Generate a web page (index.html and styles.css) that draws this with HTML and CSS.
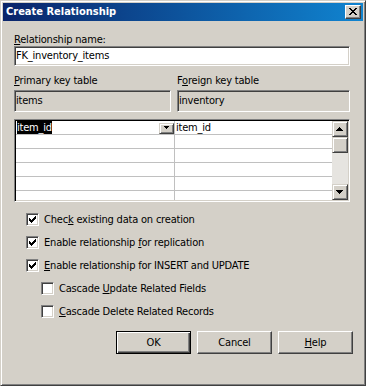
FILE: index.html
```html
<!DOCTYPE html>
<html lang="en">
  <head>
    <meta charset="UTF-8" />
    <title>Create Relationship</title>
    <link rel="stylesheet" href="styles.css">
  </head>
  <body>
    <div class="window">
      <div class="titlebar">
        <span class="title">Create Relationship</span>
        <span class="close-btn">
          <svg width="8" height="7" viewBox="0 0 8 7" shape-rendering="crispEdges">
            <path fill="#000" d="M0 0h2v1H0zM6 0h2v1H6zM1 1h2v1H1zM5 1h2v1H5zM2 2h4v1H2zM3 3h2v1H3zM2 4h4v1H2zM1 5h2v1H1zM5 5h2v1H5zM0 6h2v1H0zM6 6h2v1H6z"/>
          </svg>
        </span>
      </div>
      <div class="content">
        <div class="label"><u>R</u>elationship name:</div>
        <div class="field">FK_inventory_items</div>

        <div class="tables">
          <div class="table-col primary">
            <div class="label"><u>P</u>rimary key table</div>
            <div class="field readonly">items</div>
          </div>
          <div class="table-col foreign">
            <div class="label">F<u>o</u>reign key table</div>
            <div class="field readonly">inventory</div>
          </div>
        </div>

        <div class="grid">
          <div class="grid-rows">
            <div class="grid-row">
              <div class="cell pk">
                <span class="selected">item_id</span>
                <span class="drop-btn">
                  <svg width="5" height="3" viewBox="0 0 5 3" shape-rendering="crispEdges">
                    <path fill="#000" d="M0 0h5v1H0zM1 1h3v1H1zM2 2h1v1H2z"/>
                  </svg>
                </span>
              </div>
              <div class="cell fk">item_id</div>
            </div>
            <div class="grid-row"><div class="cell pk"></div><div class="cell fk"></div></div>
            <div class="grid-row"><div class="cell pk"></div><div class="cell fk"></div></div>
            <div class="grid-row"><div class="cell pk"></div><div class="cell fk"></div></div>
            <div class="grid-row"><div class="cell pk"></div><div class="cell fk"></div></div>
            <div class="grid-row"><div class="cell pk"></div><div class="cell fk"></div></div>
          </div>
          <div class="scrollbar">
            <span class="sb-btn">
              <svg width="7" height="4" viewBox="0 0 7 4" shape-rendering="crispEdges">
                <path fill="#000" d="M3 0h1v1H3zM2 1h3v1H2zM1 2h5v1H1zM0 3h7v1H0z"/>
              </svg>
            </span>
            <span class="sb-btn thumb"></span>
            <span class="sb-track"></span>
            <span class="sb-btn">
              <svg width="7" height="4" viewBox="0 0 7 4" shape-rendering="crispEdges">
                <path fill="#000" d="M0 0h7v1H0zM1 1h5v1H1zM2 2h3v1H2zM3 3h1v1H3z"/>
              </svg>
            </span>
          </div>
        </div>

        <div class="options">
          <div class="check">
            <span class="box"><svg width="7" height="7" viewBox="0 0 7 7" shape-rendering="crispEdges"><path fill="#000" d="M6 0h1v1H6zM5 1h2v1H5zM0 2h1v1H0zM4 2h3v1H4zM0 3h2v1H0zM3 3h3v1H3zM0 4h5v1H0zM1 5h3v1H1zM2 6h1v1H2z"/></svg></span>
            <span>Chec<u>k</u> existing data on creation</span>
          </div>
          <div class="check">
            <span class="box"><svg width="7" height="7" viewBox="0 0 7 7" shape-rendering="crispEdges"><path fill="#000" d="M6 0h1v1H6zM5 1h2v1H5zM0 2h1v1H0zM4 2h3v1H4zM0 3h2v1H0zM3 3h3v1H3zM0 4h5v1H0zM1 5h3v1H1zM2 6h1v1H2z"/></svg></span>
            <span>Enable relationship <u>f</u>or replication</span>
          </div>
          <div class="check">
            <span class="box"><svg width="7" height="7" viewBox="0 0 7 7" shape-rendering="crispEdges"><path fill="#000" d="M6 0h1v1H6zM5 1h2v1H5zM0 2h1v1H0zM4 2h3v1H4zM0 3h2v1H0zM3 3h3v1H3zM0 4h5v1H0zM1 5h3v1H1zM2 6h1v1H2z"/></svg></span>
            <span><u>E</u>nable relationship for INSERT and UPDATE</span>
          </div>
          <div class="check sub">
            <span class="box"></span>
            <span>Cascade <u>U</u>pdate Related Fields</span>
          </div>
          <div class="check sub">
            <span class="box"></span>
            <span><u>C</u>ascade Delete Related Records</span>
          </div>
        </div>

        <div class="buttons">
          <button class="btn default">OK</button>
          <button class="btn">Cancel</button>
          <button class="btn"><u>H</u>elp</button>
        </div>
      </div>
    </div>
  </body>
</html>
```

FILE: styles.css
```css
body {
  margin: 0;
  font-family: "DejaVu Sans Condensed", "DejaVu Sans", sans-serif;
  font-stretch: condensed;
  font-size: 11px;
  letter-spacing: -0.2px;
  color: #000;
  background-color: #d4d0c8;
}
u {
  text-decoration: underline;
  text-underline-offset: 1px;
}

.window {
  width: 366px;
  height: 386px;
  box-sizing: border-box;
  padding: 2px;
  background: #d4d0c8;
  border: 1px solid;
  border-color: #d4d0c8 #404040 #404040 #d4d0c8;
  box-shadow: inset 1px 1px #fff, inset -1px -1px #808080;
}

.titlebar {
  height: 18px;
  display: flex;
  align-items: center;
  justify-content: space-between;
  padding: 0 2px 0 3px;
  background: linear-gradient(to right, #0a246a, #1084d0);
  color: white;
  font-weight: bold;
  letter-spacing: 0;
  line-height: 18px;
}
.close-btn {
  width: 16px;
  height: 14px;
  box-sizing: border-box;
  background: #d4d0c8;
  border: 1px solid;
  border-color: #fff #404040 #404040 #fff;
  box-shadow: inset -1px -1px #808080;
}
.close-btn svg {
  display: block;
  margin: 2px 0 0 3px;
}

.content {
  padding: 12px 13px 0 11px;
}
.label {
  height: 13px;
  line-height: 13px;
  white-space: nowrap;
}

/* sunken edit boxes */
.field {
  height: 20px;
  box-sizing: border-box;
  padding: 1px;
  line-height: 16px;
  background: white;
  border: 1px solid;
  border-color: #808080 #fff #fff #808080;
  box-shadow: inset 1px 1px #404040, inset -1px -1px #d4d0c8;
  white-space: nowrap;
}
.field.readonly {
  height: 22px;
  line-height: 18px;
  margin-top: 3px;
  background: #d4d0c8;
}

.tables {
  display: flex;
  gap: 6px;
  margin-top: 8px;
}
.primary {
  width: 157px;
}
.foreign {
  flex: 1;
}

.grid {
  display: flex;
  height: 83px;
  margin-top: 7px;
  box-sizing: border-box;
  padding: 1px;
  background: white;
  border: 1px solid;
  border-color: #808080 #fff #fff #808080;
  box-shadow: inset 1px 1px #000, inset -1px -1px #d4d0c8;
}
.grid-rows {
  flex: 1;
  overflow: hidden;
}
.grid-row {
  display: flex;
  height: 14px;
  box-sizing: border-box;
  border-bottom: 1px solid #c0c0c0;
}
.cell {
  height: 13px;
  line-height: 13px;
  box-sizing: border-box;
}
.cell.pk {
  width: 159px;
  padding-left: 1px;
  display: flex;
  justify-content: space-between;
  align-items: flex-end;
  border-right: 1px solid #c0c0c0;
}
.cell.fk {
  flex: 1;
  padding-left: 1px;
}
.selected {
  background: #000;
  color: white;
  height: 13px;
  align-self: flex-start;
}
.drop-btn {
  width: 15px;
  height: 11px;
  box-sizing: border-box;
  background: #d4d0c8;
  border: 1px solid;
  border-color: #d4d0c8 #404040 #404040 #d4d0c8;
  box-shadow: inset 1px 1px #fff, inset -1px -1px #808080;
}
.drop-btn svg {
  display: block;
  margin: 2px 0 0 4px;
}

.scrollbar {
  width: 16px;
  display: flex;
  flex-direction: column;
}
.sb-btn {
  width: 16px;
  height: 16px;
  box-sizing: border-box;
  background: #d4d0c8;
  border: 1px solid;
  border-color: #d4d0c8 #404040 #404040 #d4d0c8;
  box-shadow: inset 1px 1px #fff, inset -1px -1px #808080;
}
.sb-btn svg {
  display: block;
  margin: 5px 0 0 3px;
}
.sb-track {
  flex: 1;
  background: #e6e4e0;
}

.options {
  margin-top: 11px;
}
.check {
  display: flex;
  align-items: center;
  height: 13px;
  line-height: 13px;
  margin-bottom: 10px;
  padding-left: 12px;
  white-space: nowrap;
}
.check.sub {
  padding-left: 27px;
}
.box {
  width: 13px;
  height: 13px;
  box-sizing: border-box;
  margin-right: 5px;
  background: white;
  border: 1px solid;
  border-color: #808080 #fff #fff #808080;
  box-shadow: inset 1px 1px #404040, inset -1px -1px #d4d0c8;
}
.box svg {
  display: block;
  margin: 2px 0 0 2px;
}

.buttons {
  display: flex;
  justify-content: flex-end;
  gap: 6px;
  margin-top: 13px;
  margin-right: -3px;
}
.btn {
  width: 75px;
  height: 23px;
  box-sizing: border-box;
  padding: 0;
  font-family: inherit;
  font-stretch: inherit;
  font-size: 11px;
  letter-spacing: -0.2px;
  color: #000;
  background: #d4d0c8;
  border: 1px solid;
  border-color: #fff #404040 #404040 #fff;
  box-shadow: inset -1px -1px #808080;
}
.btn.default {
  border-color: #000;
  box-shadow: inset 1px 1px #fff, inset -1px -1px #404040, inset -2px -2px #808080;
}
```
